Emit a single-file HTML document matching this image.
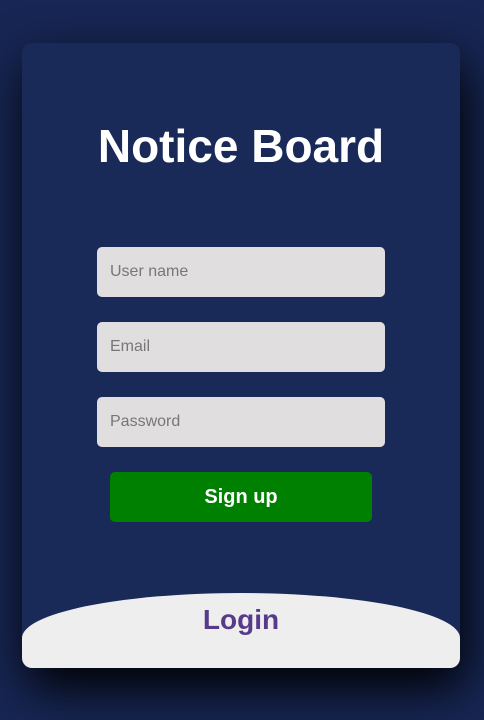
<!DOCTYPE html>
<html><head><meta charset="utf-8"><style>
html,body{margin:0;padding:0;width:484px;height:720px;overflow:hidden}
body{background:#172654;font-family:"Liberation Sans",Arial,sans-serif;position:relative}
.card{position:absolute;left:22px;top:43px;width:438px;height:625px;background:#1a2a58;border-radius:10px;overflow:hidden;box-shadow:5px 20px 50px #000}
h1{position:absolute;top:78px;left:0;width:100%;margin:0;text-align:center;color:#fff;font-size:46px;font-weight:bold;line-height:50px}
.in{position:absolute;left:75px;width:288px;height:50px;background:#e0dedf;border-radius:5px;color:#777;font-size:16px;line-height:50px;box-sizing:border-box;padding-left:13px}
.btn{position:absolute;left:88px;top:429px;width:262px;height:50px;background:#008000;border-radius:5px;color:#fff;font-weight:bold;font-size:20px;line-height:50px;text-align:center}
.login{position:absolute;left:0;top:550px;width:438px;height:200px;background:#eeeeee;border-radius:219px 219px 0 0 / 45px 45px 0 0}
.lt{position:absolute;top:560px;left:0;width:100%;text-align:center;color:#573b8a;font-weight:bold;font-size:28px;line-height:34px}
</style></head><body>
<div class="card">
<h1>Notice Board</h1>
<div class="in" style="top:204px">User name</div>
<div class="in" style="top:279px">Email</div>
<div class="in" style="top:354px">Password</div>
<div class="btn">Sign up</div>
<div class="login"></div>
<div class="lt">Login</div>
</div>
</body></html>
